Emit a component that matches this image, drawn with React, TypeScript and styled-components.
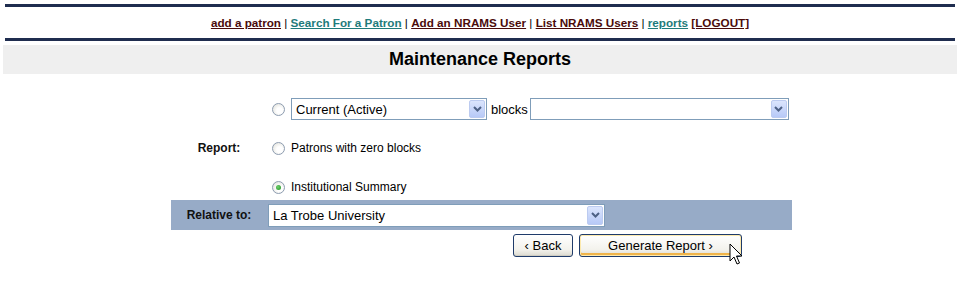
import React from 'react';
import styled, { createGlobalStyle } from 'styled-components';

const GlobalStyle = createGlobalStyle`
  body {
    margin: 0;
    background: #fff;
    font-family: "Liberation Sans", Arial, sans-serif;
  }
`

const Page = styled.div`
  position: relative;
  width: 959px;
  height: 290px;
  padding: 4px 2px 0 3px;
  box-sizing: border-box;
`

const Rule = styled.div`
  height: 3px;
  margin: 0 2px;
  background: #1f2d4f;
`

const Nav = styled.nav`
  height: 31px;
  display: flex;
  align-items: center;
  justify-content: center;
  font-size: 11.7px;
  font-weight: bold;
  white-space: pre;
`

const NavLink = styled.a<{ $tone: 'maroon' | 'teal' }>`
  color: ${(p) => (p.$tone === 'teal' ? '#1f7b7b' : '#4a0b0b')};
  text-decoration: underline;
  cursor: pointer;
`

const Sep = styled.span`
  font-weight: normal;
  color: #000;
`

const TitleBar = styled.h1`
  margin: 4px 0 0;
  height: 29px;
  line-height: 29px;
  background: #efefef;
  font-size: 18px;
  font-weight: bold;
  text-align: center;
  color: #000;
`

const Form = styled.div`
  width: 621px;
  margin: 22px 0 0 168px;
`

const ReportSection = styled.div`
  display: grid;
  grid-template-columns: 96px 1fr;
`

const Label = styled.div`
  display: flex;
  align-items: center;
  justify-content: center;
  font-size: 12px;
  font-weight: bold;
  color: #111;
`

const Options = styled.div`
  display: flex;
  flex-direction: column;
  gap: 13px;
`

const OptionRow = styled.label`
  height: 26px;
  display: flex;
  align-items: center;
  font-size: 12px;
  color: #000;
`

const Radio = styled.input.attrs({ type: 'radio' })`
  appearance: none;
  width: 13px;
  height: 13px;
  margin: 0 6px 0 5px;
  border: 1px solid #8d9cb0;
  border-radius: 50%;
  box-sizing: border-box;
  background: radial-gradient(circle at 60% 60%, #fff 30%, #dcdcd4 100%);
  display: grid;
  place-items: center;

  &:checked::after {
    content: '';
    width: 5px;
    height: 5px;
    border-radius: 50%;
    background: radial-gradient(circle at 40% 40%, #6fd06f, #1e8f1e);
  }
`

const Blocks = styled.span`
  font-size: 13px;
  margin: 0 2px 0 4px;
`

const Select = styled.div<{ $width: number; $height?: number }>`
  width: ${(p) => p.$width}px;
  height: ${(p) => p.$height ?? 22}px;
  box-sizing: border-box;
  border: 1px solid #7f9db9;
  background: #fff;
  display: flex;
  align-items: center;
  padding-left: 4px;
  font-size: 13px;
  color: #000;
`

const SelectText = styled.span`
  flex: 1;
`

const DropButton = styled.span`
  width: 16px;
  height: calc(100% - 2px);
  margin-right: 1px;
  box-sizing: border-box;
  border: 1px solid #bccbf0;
  border-radius: 2px;
  background: linear-gradient(#dbe5fd, #b7c9f7);
  display: flex;
  align-items: center;
  justify-content: center;
`

const RelativeRow = styled.div`
  display: grid;
  grid-template-columns: 96px 1fr;
  align-items: center;
  height: 30px;
  background: #97abc7;
`

const FieldCell = styled.div`
  padding-left: 1px;
`

const Buttons = styled.div`
  display: flex;
  justify-content: flex-end;
  gap: 6px;
  padding: 4px 50px 0 0;
`

const Button = styled.button<{ $width: number; $focus?: boolean }>`
  width: ${(p) => p.$width}px;
  height: 23px;
  border: 1px solid #1f3b6a;
  border-radius: 3px;
  background: linear-gradient(#fff, #f3f2ec 70%, #dcdad0);
  font-family: "Liberation Sans", Arial, sans-serif;
  font-size: 13px;
  color: #000;
  padding: 0;
  box-shadow: ${(p) =>
    p.$focus
      ? 'inset 0 0 0 1px #fce9ad, inset 0 -2px 0 1px #f0b44a'
      : 'inset 0 -1px 0 #cfcdc2'};
`

const Cursor = styled.svg`
  position: absolute;
  left: 729px;
  top: 243px;
`

const Chevron = () => (
  <svg width="9" height="6" viewBox="0 0 9 6">
    <path d="M1 1 L4.5 4.5 L8 1" fill="none" stroke="#4d6185" strokeWidth="2" />
  </svg>
)

const Dropdown: React.FC<{ width: number; height?: number; value?: string }> = ({ width, height, value }) => (
  <Select $width={width} $height={height}>
    <SelectText>{value}</SelectText>
    <DropButton>
      <Chevron />
    </DropButton>
  </Select>
)

const App: React.FC = () => {
  return (
    <Page>
      <GlobalStyle />
      <Rule />
      <Nav>
        <NavLink $tone="maroon">add a patron</NavLink>
        <Sep> | </Sep>
        <NavLink $tone="teal">Search For a Patron</NavLink>
        <Sep> | </Sep>
        <NavLink $tone="maroon">Add an NRAMS User</NavLink>
        <Sep> | </Sep>
        <NavLink $tone="maroon">List NRAMS Users</NavLink>
        <Sep> | </Sep>
        <NavLink $tone="teal">reports</NavLink>
        <Sep> </Sep>
        <NavLink $tone="maroon">[LOGOUT]</NavLink>
      </Nav>
      <Rule />
      <TitleBar>Maintenance Reports</TitleBar>

      <Form>
        <ReportSection>
          <Label>Report:</Label>
          <Options>
            <OptionRow>
              <Radio name="report" />
              <Dropdown width={196} value="Current (Active)" />
              <Blocks>blocks</Blocks>
              <Dropdown width={259} />
            </OptionRow>
            <OptionRow>
              <Radio name="report" />
              Patrons with zero blocks
            </OptionRow>
            <OptionRow>
              <Radio name="report" defaultChecked />
              Institutional Summary
            </OptionRow>
          </Options>
        </ReportSection>

        <RelativeRow>
          <Label>Relative to:</Label>
          <FieldCell>
            <Dropdown width={337} height={23} value="La Trobe University" />
          </FieldCell>
        </RelativeRow>

        <Buttons>
          <Button $width={60}>‹ Back</Button>
          <Button $width={163} $focus>Generate Report ›</Button>
        </Buttons>
      </Form>

      <Cursor width="14" height="24" viewBox="0 0 14 24">
        <path
          d="M1 1 L1 18 L5 14 L8 21 L10.5 20 L7.5 13 L13 13 Z"
          fill="#fff"
          stroke="#000"
          strokeWidth="1"
          strokeLinejoin="miter"
        />
      </Cursor>
    </Page>
  );
};

export default App;
